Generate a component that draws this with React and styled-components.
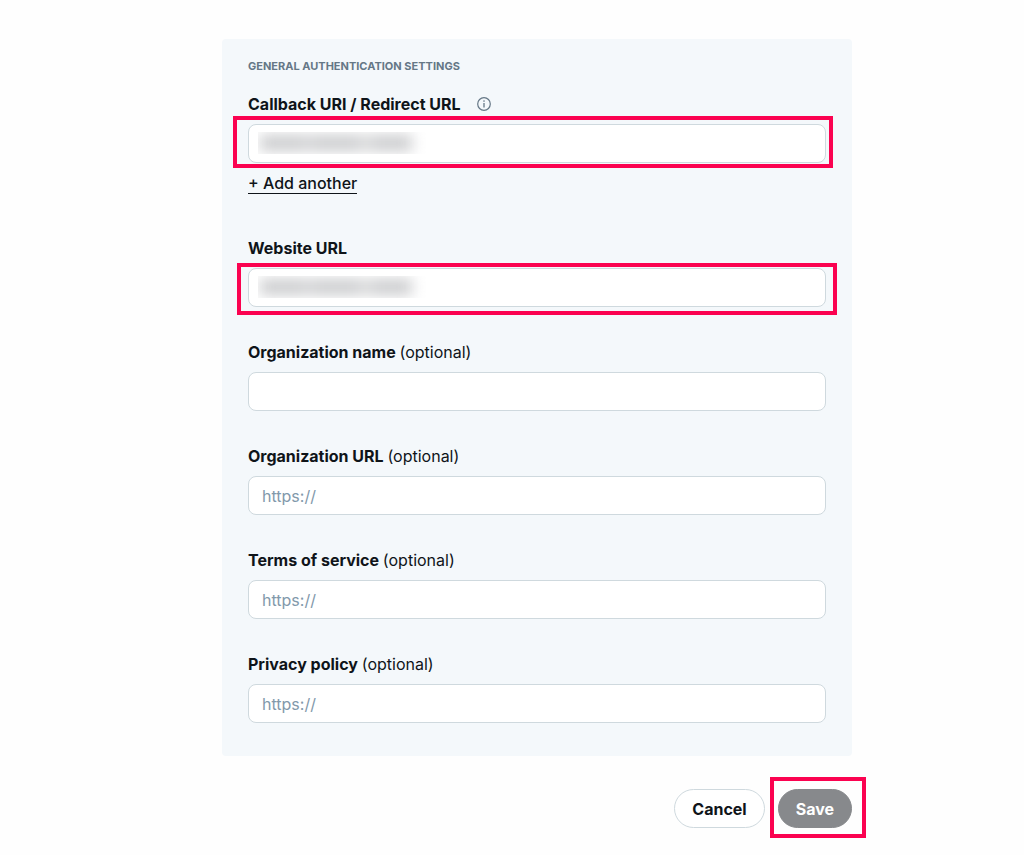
import React from 'react';
import styled, { createGlobalStyle } from 'styled-components';

const GlobalStyle = createGlobalStyle`
    *, *::before, *::after {
        box-sizing: border-box;
    }

    body {
        margin: 0;
        background: #fefefe;
        color: #0f1419;
        font-family: Inter, 'Liberation Sans', sans-serif;
        font-size: 16px;
        line-height: 20px;
    }
`;

const Page = styled.main`
    padding: 39px 0 26px 50px;
`;

const Form = styled.form`
    width: 100%;
    max-width: 630px;
    margin: 0 auto;
`;

const Panel = styled.section`
    padding: 19px 26px 33px;
    border-radius: 4px;
    background: #f4f8fb;
`;

const Title = styled.h2`
    margin: 0 0 20px;
    color: #657786;
    font-size: 11px;
    font-weight: 700;
    line-height: 16px;
    text-transform: uppercase;
`;

const Fields = styled.div`
    display: flex;
    flex-direction: column;
    gap: 35px;
`;

const Field = styled.div`
    display: flex;
    flex-direction: column;
    gap: 10px;
`;

const LabelRow = styled.div`
    display: flex;
    align-items: center;
    gap: 16px;
`;

const Label = styled.label`
    font-weight: 700;
`;

const Optional = styled.span`
    font-weight: 400;
`;

const InfoButton = styled.button`
    display: flex;
    padding: 0;
    border: 0;
    background: none;
    color: #657786;
`;

const Control = styled.div`
    position: relative;
`;

const Input = styled.input`
    display: block;
    width: 100%;
    height: 39px;
    padding: 0 13px;
    border: 1px solid #cfd9de;
    border-radius: 8px;
    background: #fff;
    color: #0f1419;
    font: inherit;

    &::placeholder {
        color: #8299ab;
        opacity: 1;
    }
`;

const Redacted = styled.div`
    position: absolute;
    top: 8px;
    left: 10px;
    width: 178px;
    height: 22px;
    overflow: hidden;

    &::before {
        content: '';
        position: absolute;
        inset: 3px 24px 3px 2px;
        background: linear-gradient(90deg, #cbccce 0 27%, #d6d7d8 32%, #cbccce 37% 62%, #dbdcdd 70%, #cbccce 77%);
        filter: blur(7px);
    }
`;

const Highlight = styled.div`
    position: absolute;
    inset: ${({ $inset }) => $inset};
    border: 4px solid #fb0250;
    pointer-events: none;
`;

const AddLink = styled.a`
    align-self: flex-start;
    margin-bottom: 9px;
    border-bottom: 1px solid #0f1419;
    color: #0f1419;
    font-weight: 500;
    text-decoration: none;
`;

const Actions = styled.div`
    display: flex;
    justify-content: flex-end;
    gap: 13px;
    margin-top: 33px;
`;

const Button = styled.button`
    height: 39px;
    padding: 0 17px;
    border: 1px solid ${({ $primary }) => ($primary ? '#87898c' : '#cfd9de')};
    border-radius: 20px;
    background: ${({ $primary }) => ($primary ? '#87898c' : '#fff')};
    color: ${({ $primary }) => ($primary ? '#fff' : '#0f1419')};
    font: inherit;
    font-weight: 700;
`;

const InfoIcon = () => (
    <svg width="14" height="14" viewBox="0 0 14 14" fill="none" stroke="currentColor" aria-hidden="true">
        <circle cx="7" cy="7" r="6.3" strokeWidth="1.2" />
        <path d="M7 6V10.4" strokeWidth="1.3" />
        <circle cx="7" cy="4.1" r=".8" fill="currentColor" stroke="none" />
    </svg>
);

const optionalFields = [
    { id: 'org-name', label: 'Organization name' },
    { id: 'org-url', label: 'Organization URL', placeholder: 'https://' },
    { id: 'terms', label: 'Terms of service', placeholder: 'https://' },
    { id: 'privacy', label: 'Privacy policy', placeholder: 'https://' },
];

const App = () => {

    return (
    <>
    <GlobalStyle />
    <Page>
        <Form onSubmit={(e) => e.preventDefault()}>
            <Panel>
                <Title>General authentication settings</Title>
                <Fields>
                    <Field>
                        <LabelRow>
                            <Label htmlFor="callback">Callback URI / Redirect URL</Label>
                            <InfoButton type="button" aria-label="About callback URIs"><InfoIcon /></InfoButton>
                        </LabelRow>
                        <Control>
                            <Input id="callback" type="url" />
                            <Redacted />
                            <Highlight $inset="-8px -7px -5px -15px" />
                        </Control>
                        <AddLink href="#callback">+ Add another</AddLink>
                    </Field>
                    <Field>
                        <Label htmlFor="website">Website URL</Label>
                        <Control>
                            <Input id="website" type="url" />
                            <Redacted />
                            <Highlight $inset="-5px -11px -8px -11px" />
                        </Control>
                    </Field>
                    {optionalFields.map(({ id, label, placeholder }) => (
                        <Field key={id}>
                            <Label htmlFor={id}>{label} <Optional>(optional)</Optional></Label>
                            <Input id={id} placeholder={placeholder} />
                        </Field>
                    ))}
                </Fields>
            </Panel>
            <Actions>
                <Button type="button">Cancel</Button>
                <Control>
                    <Button type="submit" $primary>Save</Button>
                    <Highlight $inset="-12px -14px -10px -8px" />
                </Control>
            </Actions>
        </Form>
    </Page>
    </>
)}


export default App;
